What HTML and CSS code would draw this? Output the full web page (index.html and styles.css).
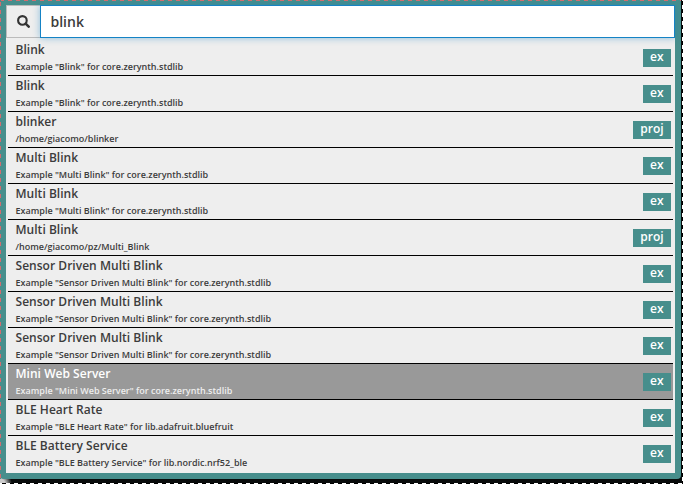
FILE: index.html
```html
<!DOCTYPE html>
<html lang="en">
<head>
<meta charset="utf-8">
<title>Search</title>
<link rel="stylesheet" href="styles.css">
</head>
<body>
<div class="stage">
<main class="popup">
  <div class="search">
    <span class="search-icon"><svg width="13" height="13" viewBox="0 0 13 13"><circle cx="5.4" cy="5.4" r="4.3" fill="none" stroke="#333" stroke-width="2.1"/><path d="M8.6 8.6 L11.7 11.7" stroke="#333" stroke-width="2.5" stroke-linecap="round"/></svg></span>
    <div class="search-field">blink</div>
  </div>
  <ul class="results">
    <li><div><h2>Blink</h2><p>Example "Blink" for core.zerynth.stdlib</p></div><span class="tag">ex</span></li>
    <li><div><h2>Blink</h2><p>Example "Blink" for core.zerynth.stdlib</p></div><span class="tag">ex</span></li>
    <li><div><h2>blinker</h2><p>/home/giacomo/blinker</p></div><span class="tag">proj</span></li>
    <li><div><h2>Multi Blink</h2><p>Example "Multi Blink" for core.zerynth.stdlib</p></div><span class="tag">ex</span></li>
    <li><div><h2>Multi Blink</h2><p>Example "Multi Blink" for core.zerynth.stdlib</p></div><span class="tag">ex</span></li>
    <li><div><h2>Multi Blink</h2><p>/home/giacomo/pz/Multi_Blink</p></div><span class="tag">proj</span></li>
    <li><div><h2>Sensor Driven Multi Blink</h2><p>Example "Sensor Driven Multi Blink" for core.zerynth.stdlib</p></div><span class="tag">ex</span></li>
    <li><div><h2>Sensor Driven Multi Blink</h2><p>Example "Sensor Driven Multi Blink" for core.zerynth.stdlib</p></div><span class="tag">ex</span></li>
    <li><div><h2>Sensor Driven Multi Blink</h2><p>Example "Sensor Driven Multi Blink" for core.zerynth.stdlib</p></div><span class="tag">ex</span></li>
    <li class="active"><div><h2>Mini Web Server</h2><p>Example "Mini Web Server" for core.zerynth.stdlib</p></div><span class="tag">ex</span></li>
    <li><div><h2>BLE Heart Rate</h2><p>Example "BLE Heart Rate" for lib.adafruit.bluefruit</p></div><span class="tag">ex</span></li>
    <li><div><h2>BLE Battery Service</h2><p>Example "BLE Battery Service" for lib.nordic.nrf52_ble</p></div><span class="tag">ex</span></li>
  </ul>
</main>
<i class="dash dash-top"></i><i class="dash dash-left"></i><i class="dash dash-right"></i><i class="dash dash-bottom"></i>
</div>
</body>
</html>
```
FILE: styles.css
```css
* { box-sizing: border-box; }
body { margin: 0; background: #080b0b; color: #3c3c3c; font-family: "Open Sans", "Noto Sans", sans-serif; font-weight: 600; }
.stage { position: relative; width: 683px; height: 484px; overflow: hidden; background: radial-gradient(circle at 0 100%, #ccc 0 5px, #080b0b 12px); }
.popup { width: 681px; height: 479px; border: 6px solid #478e8c; border-top-width: 5px; border-radius: 0 0 4px 4px; background: #eee; }
.search { display: flex; height: 33px; }
.search-icon { display: flex; align-items: center; justify-content: center; width: 34px; padding: 0 1px 1px 0; border: 1px solid #bbb; border-right: 0; }
.search-field { flex: 1; padding-left: 9.5px; border: 1px solid #1583c5; background: #fff; box-shadow: 0 0 7px rgba(21, 131, 197, .45); font-size: 14px; line-height: 31px; font-weight: 580; }
.results { margin: 2px 2px 0; padding: 0; list-style: none; }
.results li { display: flex; justify-content: space-between; height: 36px; padding: 0 2px 0 7.5px; border-bottom: 1px solid #000; }
.results li:last-child { border-bottom: 0; }
.results .active { background: #999; color: #fff; }
h2 { margin: 0; padding-top: 1px; font-size: 12px; line-height: 18px; font-weight: 560; letter-spacing: .03px; }
p { margin: 0; font-size: 9px; line-height: 16px; font-weight: 600; }
.active p { color: #eee; }
.tag { height: 18px; margin-top: 9px; padding: 0 7.4px; background: #478e8c; color: #fff; font-size: 12px; line-height: 16px; font-weight: 560; }
.dash { position: absolute; }
.dash-top { top: 0; left: 0; right: 2px; height: 1px; background: repeating-linear-gradient(90deg, #d36c70 0 4px, #478e8c 4px 8px); }
.dash-left { top: 0; left: 0; bottom: 5px; width: 1px; background: repeating-linear-gradient(#478e8c 0 2px, #d36c70 2px 6px, #478e8c 6px 8px); }
.dash-right { top: 0; right: 0; bottom: 0; width: 1px; background: repeating-linear-gradient(#fff 0 1px, #000 1px 5px, #fff 5px 8px); }
.dash-bottom { left: 0; right: 0; bottom: 0; height: 1px; background: repeating-linear-gradient(90deg, #fff 0 2px, #000 2px 6px, #fff 6px 8px); }
```
